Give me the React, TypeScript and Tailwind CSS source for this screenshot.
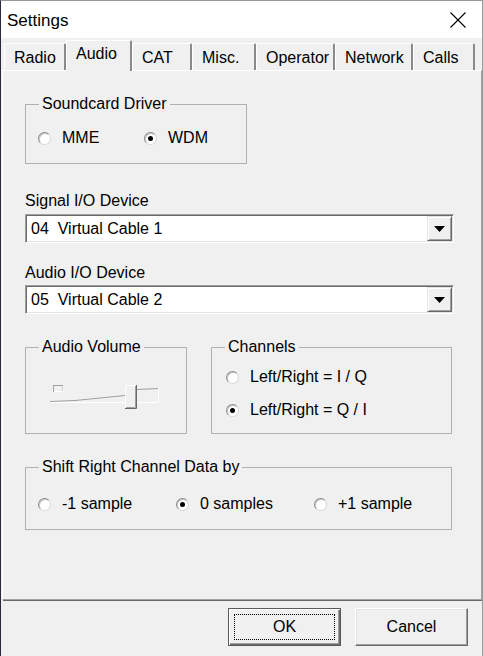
import React from "react";

function Radio({ checked }: { checked?: boolean }) {
  return (
    <span className="inline-flex w-[13px] h-[13px] shrink-0 items-center justify-center rounded-full bg-white border border-[#8c8c8c] border-b-[#d8d8d8] border-r-[#d8d8d8] shadow-[inset_1px_1px_0_#c8c8c8]">
      {checked && <span className="w-[5px] h-[5px] rounded-full bg-black" />}
    </span>
  );
}

function RadioLabel({ checked, label, className = "" }: { checked?: boolean; label: string; className?: string }) {
  return (
    <div className={`flex items-center gap-[11px] ${className}`}>
      <Radio checked={checked} />
      <span className="leading-[18px]">{label}</span>
    </div>
  );
}

function Group({ title, className = "", children }: { title: string; className?: string; children?: React.ReactNode }) {
  return (
    <fieldset className={`border border-[#b0b0b0] ${className}`}>
      <legend className="ml-[13px] px-[3px] leading-[18px]">{title}</legend>
      {children}
    </fieldset>
  );
}

function Combo({ value }: { value: string }) {
  return (
    <div className="flex h-[29px] w-[429px] items-center justify-between border border-t-[#a0a0a0] border-l-[#a0a0a0] border-b-white border-r-white bg-white shadow-[inset_1px_1px_0_#696969,inset_-1px_-1px_0_#e3e3e3]">
      <span className="pl-[5px] whitespace-pre leading-[18px]">{value}</span>
      <div className="mr-[1px] flex h-[25px] w-[25px] items-center justify-center border border-t-[#e3e3e3] border-l-[#e3e3e3] border-b-[#696969] border-r-[#696969] bg-[#f0f0f0] shadow-[inset_1px_1px_0_white,inset_-1px_-1px_0_#a0a0a0]">
        <svg width="11" height="6" viewBox="0 0 11 6">
          <polygon points="0,0 11,0 5.5,6" fill="#000" />
        </svg>
      </div>
    </div>
  );
}

const tabs = [
  { name: "Radio", w: "w-[62px]" },
  { name: "Audio", w: "w-[66px]", sel: true },
  { name: "CAT", w: "w-[60px]" },
  { name: "Misc.", w: "w-[64px]" },
  { name: "Operator", w: "w-[79px]" },
  { name: "Network", w: "w-[78px]" },
  { name: "Calls", w: "w-[62px]" },
];

export default function App() {
  return (
    <div className="w-[483px] h-[656px] overflow-hidden bg-[#f0f0f0] border-l border-l-[#2a2a3a] border-r border-r-[#9a9a9a] border-t border-t-[#9a9a9a] font-['Liberation_Sans',Arial,sans-serif] text-[16px] text-black flex flex-col">
      {/* Title bar */}
      <div className="h-[37px] shrink-0 bg-white flex items-center justify-between pl-[6px] pr-[16px]">
        <span className="text-[17px] leading-[20px] pt-[2px]">Settings</span>
        <svg width="16" height="16" viewBox="0 0 16 16">
          <path d="M0.5 0.5 L15.5 15.5 M15.5 0.5 L0.5 15.5" stroke="#000" strokeWidth="1.1" />
        </svg>
      </div>

      {/* Tabs */}
      <div className="h-[32px] shrink-0 flex items-end pl-[3px]">
        {tabs.map((t) =>
          t.sel ? (
            <div
              key={t.name}
              className={`${t.w} h-[31px] relative z-10 -mb-[1px] bg-[#f0f0f0] border-l border-t border-white border-r-2 border-r-[#8a8a8a] rounded-t-[2px] pl-[9px] pt-[4px] leading-[18px]`}
            >
              {t.name}
            </div>
          ) : (
            <div
              key={t.name}
              className={`${t.w} h-[27px] bg-[#f0f0f0] border-l border-t border-white border-r-2 border-r-[#8a8a8a] rounded-t-[2px] pl-[9px] pt-[5px] leading-[18px]`}
            >
              {t.name}
            </div>
          )
        )}
      </div>

      {/* Panel */}
      <div className="ml-[1px] w-[480px] h-[530px] shrink-0 border-l border-t border-white border-r border-b border-r-[#a0a0a0] border-b-[#a0a0a0] shadow-[1px_1px_0_#696969] pl-[22px] pt-[24px]">
        <Group title="Soundcard Driver" className="w-[222px] h-[69px]">
          <div className="flex items-center pl-[12px] pt-[16px]">
            <RadioLabel label="MME" className="w-[106px]" />
            <RadioLabel label="WDM" checked />
          </div>
        </Group>

        <div className="mt-[28px] leading-[18px]">Signal I/O Device</div>
        <div className="mt-[4px]">
          <Combo value="04  Virtual Cable 1" />
        </div>

        <div className="mt-[21px] leading-[18px]">Audio I/O Device</div>
        <div className="mt-[3px]">
          <Combo value="05  Virtual Cable 2" />
        </div>

        <div className="mt-[24px] flex gap-[24px]">
          <Group title="Audio Volume" className="w-[162px] h-[96px]">
            <div className="pl-[24px] pt-[28px]">
              <svg width="112" height="28" viewBox="0 0 112 28">
                {/* tick */}
                <rect x="3.5" y="1.5" width="9" height="6" fill="none" stroke="#a0a0a0" />
                <path d="M4 7.5 H13 V2" stroke="#fff" fill="none" />
                {/* tapered track */}
                <path d="M0 17.5 L25 16.5 L45 14.5 L75 11.5" stroke="#a0a0a0" fill="none" />
                <path d="M0 18.5 H108.5 V4" stroke="#fff" fill="none" />
                <path d="M87 5.5 L108 4.5" stroke="#a0a0a0" fill="none" />
                {/* thumb */}
                <rect x="75" y="1" width="12" height="23" fill="#f0f0f0" />
                <path d="M75.5 24 V1.5 H86" stroke="#fff" fill="none" />
                <path d="M86.5 1 V24.5 H75" stroke="#696969" fill="none" />
                <path d="M85.5 2 V23.5 H76" stroke="#a0a0a0" fill="none" />
              </svg>
            </div>
          </Group>
          <Group title="Channels" className="w-[241px] h-[96px]">
            <div className="pl-[14px] pt-[12px]">
              <RadioLabel label="Left/Right = I / Q" />
              <RadioLabel label="Left/Right = Q / I" checked className="mt-[15px]" />
            </div>
          </Group>
        </div>

        <Group title="Shift Right Channel Data by" className="mt-[24px] w-[427px] h-[72px]">
          <div className="flex items-center pl-[12px] pt-[19px]">
            <RadioLabel label="-1 sample" className="w-[138px]" />
            <RadioLabel label="0 samples" checked className="w-[138px]" />
            <RadioLabel label="+1 sample" />
          </div>
        </Group>
      </div>

      {/* Buttons */}
      <div className="mt-[8px] flex gap-[14px] pl-[227px]">
        <div className="w-[113px] h-[38px] border border-[#5a5a5a] bg-[#f0f0f0] shadow-[inset_1px_1px_0_white,inset_-1px_-1px_0_#696969,inset_-2px_-2px_0_#a0a0a0] flex items-center justify-center p-[5px]">
          <div className="w-full h-full border border-dotted border-black flex items-center justify-center leading-[18px]">
            OK
          </div>
        </div>
        <div className="w-[113px] h-[38px] border border-t-white border-l-white border-b-[#696969] border-r-[#696969] bg-[#f0f0f0] shadow-[inset_-1px_-1px_0_#a0a0a0,inset_1px_1px_0_#e3e3e3] flex items-center justify-center leading-[18px]">
          Cancel
        </div>
      </div>
    </div>
  );
}
